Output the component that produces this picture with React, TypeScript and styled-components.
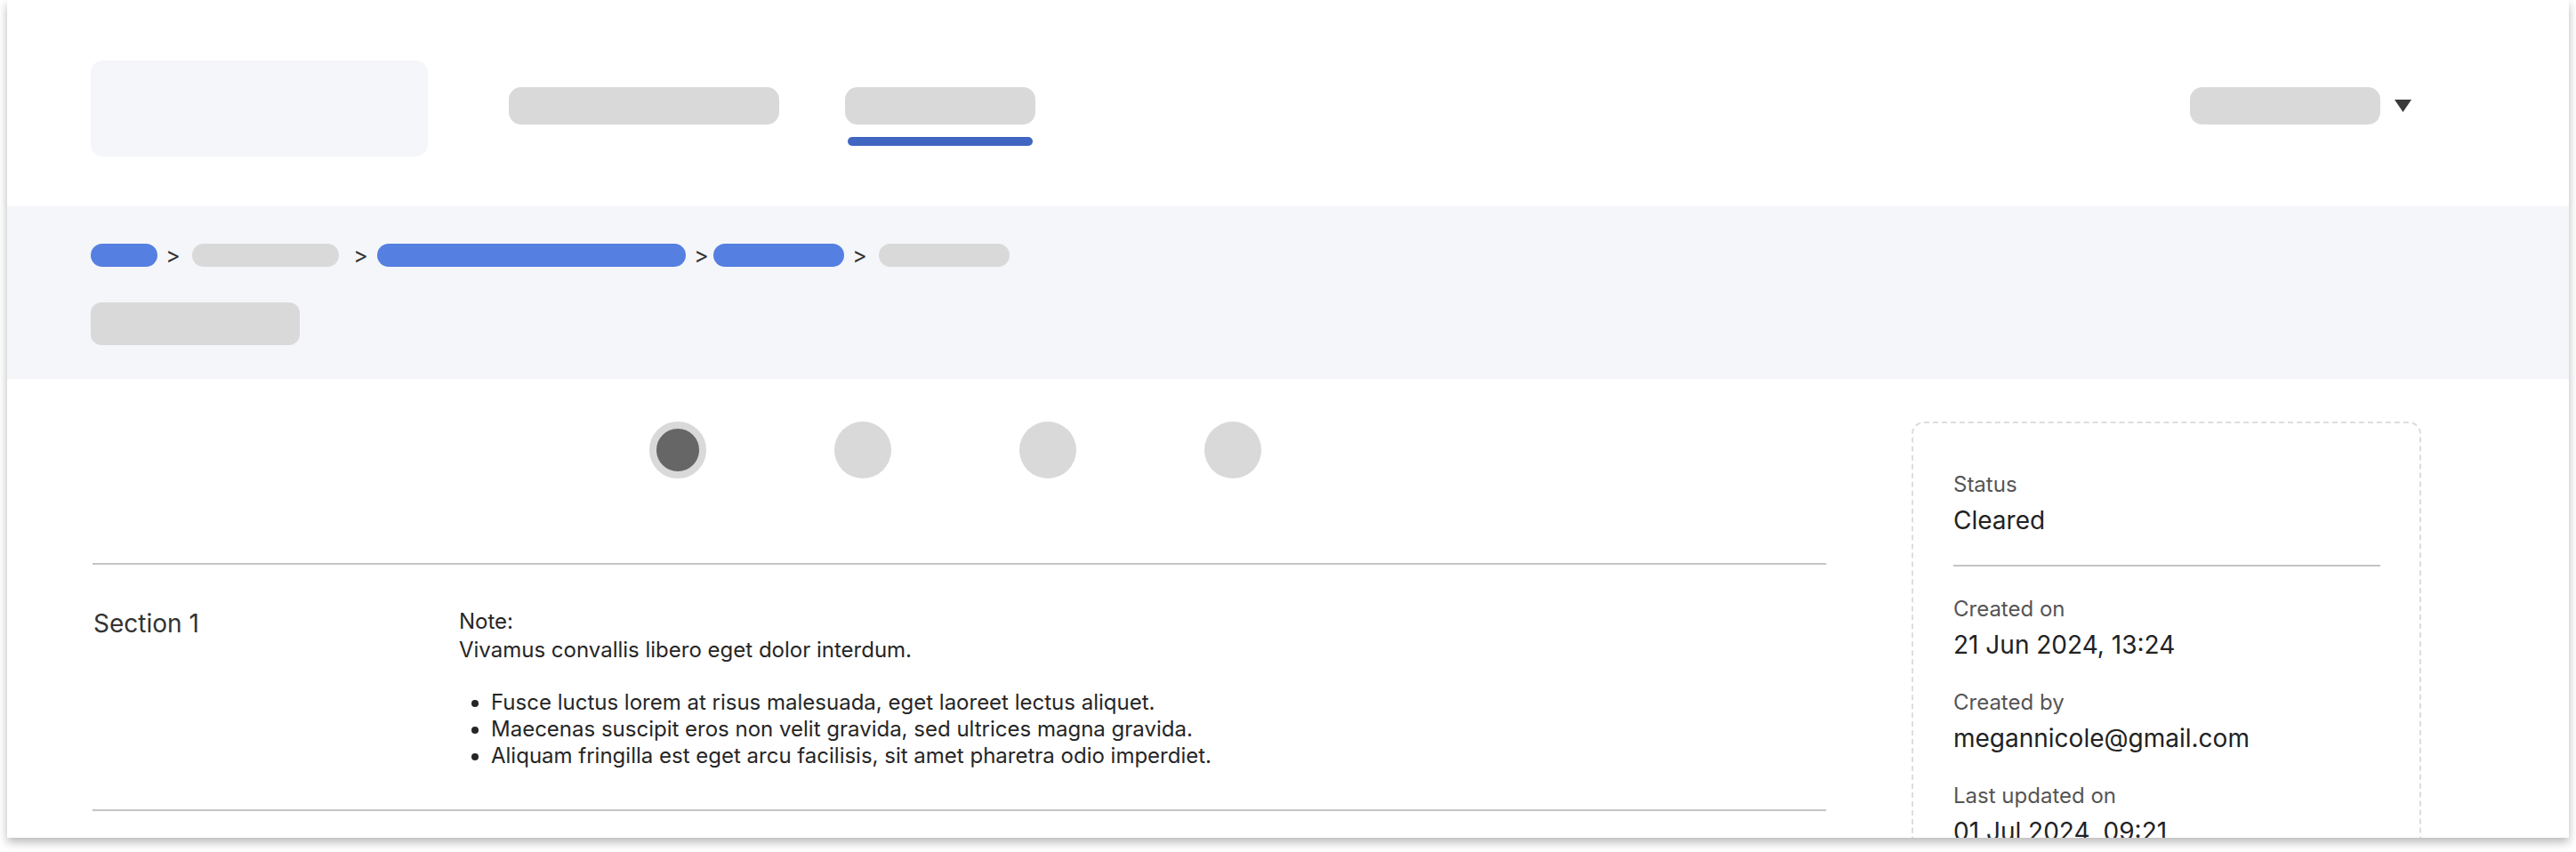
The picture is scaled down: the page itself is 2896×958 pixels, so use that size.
import React from 'react';
import styled, { createGlobalStyle } from 'styled-components';

const GlobalStyle = createGlobalStyle`
  html, body {
    margin: 0;
    padding: 0;
    background: #ffffff;
  }
  body {
    font-family: Inter, "Noto Sans", "Liberation Sans", sans-serif;
    color: #333333;
  }
`;

const Page = styled.div`
  padding: 0 8px 16px 8px;
`;

const Frame = styled.div`
  width: 2880px;
  height: 942px;
  overflow: hidden;
  background: #ffffff;
  box-shadow: 0 5px 10px rgba(0, 0, 0, 0.28);
  display: flex;
  flex-direction: column;
`;

const Header = styled.header`
  height: 232px;
  flex-shrink: 0;
  display: flex;
  align-items: flex-start;
  padding: 68px 177px 0 94px;
  box-sizing: border-box;
`;

const Logo = styled.div`
  width: 379px;
  height: 108px;
  border-radius: 14px;
  background: #f5f6fa;
`;

const Nav = styled.nav`
  display: flex;
  gap: 74px;
  margin: 30px 0 0 91px;
`;

const NavItem = styled.div`
  display: flex;
  flex-direction: column;
  align-items: center;
  gap: 14px;
`;

const Pill = styled.div<{ $w: number; $h?: number; $blue?: boolean; $r?: number }>`
  width: ${(p) => p.$w}px;
  height: ${(p) => p.$h ?? 42}px;
  border-radius: ${(p) => p.$r ?? 14}px;
  background: ${(p) => (p.$blue ? '#557fe0' : '#d9d9d9')};
  flex-shrink: 0;
`;

const Underline = styled.div`
  width: 208px;
  height: 10px;
  border-radius: 5px;
  background: #4166c1;
`;

const UserMenu = styled.div`
  margin: 30px 0 0 auto;
  display: flex;
  align-items: center;
  gap: 16px;
`;

const Band = styled.section`
  background: #f5f6fa;
  height: 194px;
  flex-shrink: 0;
  box-sizing: border-box;
  padding: 42px 0 0 94px;
  display: flex;
  flex-direction: column;
  gap: 40px;
`;

const Crumbs = styled.div`
  display: flex;
  align-items: center;
  height: 26px;
`;

const Sep = styled.span<{ $l: number; $r: number }>`
  width: 19px;
  margin: 0 ${(p) => p.$r}px 0 ${(p) => p.$l}px;
  text-align: center;
  font-size: 25px;
  line-height: 26px;
  color: #333333;
`;

const Main = styled.main`
  display: flex;
  align-items: flex-start;
  gap: 96px;
  padding: 48px 0 0 96px;
`;

const Left = styled.div`
  width: 1949px;
  flex-shrink: 0;
`;

const Stepper = styled.div`
  display: flex;
  justify-content: center;
  gap: 144px;
  padding-right: 9px;
`;

const Step = styled.div<{ $active?: boolean }>`
  width: 64px;
  height: 64px;
  border-radius: 50%;
  box-sizing: border-box;
  background: ${(p) => (p.$active ? '#666666' : '#d9d9d9')};
  border: ${(p) => (p.$active ? '8px solid #d9d9d9' : 'none')};
`;

const Divider = styled.hr<{ $mt?: number }>`
  margin: ${(p) => p.$mt ?? 0}px 0 0 0;
  border: none;
  height: 2px;
  background: #c4c4c4;
`;

const SectionRow = styled.div`
  display: grid;
  grid-template-columns: 411px 1fr;
  padding: 48px 0 45px 1px;
`;

const SectionTitle = styled.div`
  font-size: 28px;
  line-height: 36px;
  color: #333333;
`;

const Note = styled.div`
  font-size: 24px;
  line-height: 32px;
  color: #262626;

  p {
    margin: 0;
  }

  ul {
    margin: 28px 0 0 0;
    padding-left: 36px;
    line-height: 30px;
  }
`;

const InfoCard = styled.aside`
  width: 573px;
  height: 600px;
  flex-shrink: 0;
  box-sizing: border-box;
  border: 2px dashed #dddddd;
  border-radius: 14px;
  padding: 54px 44px 0 45px;
`;

const Field = styled.div`
  & + & {
    margin-top: 32px;
  }
`;

const Label = styled.div`
  font-size: 24px;
  line-height: 30px;
  color: #555555;
`;

const Value = styled.div`
  margin-top: 7px;
  font-size: 28px;
  line-height: 36px;
  color: #222222;
`;

const CardRule = styled.hr`
  margin: 32px 0 33px;
  border: none;
  height: 2px;
  background: #c4c4c4;
`;

const Caret = () => (
  <svg width="19" height="14" viewBox="0 0 19 14">
    <polygon points="0,0 19,0 9.5,14" fill="#3a3a3a" />
  </svg>
);

// each crumb: pill width, colour, and the space around the separator before it
const crumbs = [
  { w: 75, blue: true, l: 0, r: 0 },
  { w: 165, blue: false, l: 8, r: 12 },
  { w: 347, blue: true, l: 15, r: 9 },
  { w: 147, blue: true, l: 8, r: 4 },
  { w: 147, blue: false, l: 8, r: 12 },
];

const App = () => {
  return (
    <>
      <GlobalStyle />
      <Page>
        <Frame>
          <Header>
            <Logo />
            <Nav>
              <NavItem>
                <Pill $w={304} />
              </NavItem>
              <NavItem>
                <Pill $w={214} />
                <Underline />
              </NavItem>
            </Nav>
            <UserMenu>
              <Pill $w={214} />
              <Caret />
            </UserMenu>
          </Header>

          <Band>
            <Crumbs>
              {crumbs.map((c, i) => (
                <React.Fragment key={i}>
                  {i > 0 && (
                    <Sep $l={c.l} $r={c.r}>
                      &gt;
                    </Sep>
                  )}
                  <Pill $w={c.w} $h={26} $r={13} $blue={c.blue} />
                </React.Fragment>
              ))}
            </Crumbs>
            <Pill $w={235} $h={48} $r={12} />
          </Band>

          <Main>
            <Left>
              <Stepper>
                <Step $active />
                <Step />
                <Step />
                <Step />
              </Stepper>
              <Divider $mt={95} />
              <SectionRow>
                <SectionTitle>Section 1</SectionTitle>
                <Note>
                  <p>Note:</p>
                  <p>Vivamus convallis libero eget dolor interdum.</p>
                  <ul>
                    <li>Fusce luctus lorem at risus malesuada, eget laoreet lectus aliquet.</li>
                    <li>Maecenas suscipit eros non velit gravida, sed ultrices magna gravida.</li>
                    <li>Aliquam fringilla est eget arcu facilisis, sit amet pharetra odio imperdiet.</li>
                  </ul>
                </Note>
              </SectionRow>
              <Divider />
            </Left>

            <InfoCard>
              <Field>
                <Label>Status</Label>
                <Value>Cleared</Value>
              </Field>
              <CardRule />
              <Field>
                <Label>Created on</Label>
                <Value>21 Jun 2024, 13:24</Value>
              </Field>
              <Field>
                <Label>Created by</Label>
                <Value>megannicole@gmail.com</Value>
              </Field>
              <Field>
                <Label>Last updated on</Label>
                <Value>01 Jul 2024, 09:21</Value>
              </Field>
            </InfoCard>
          </Main>
        </Frame>
      </Page>
    </>
  );
};

export default App;
